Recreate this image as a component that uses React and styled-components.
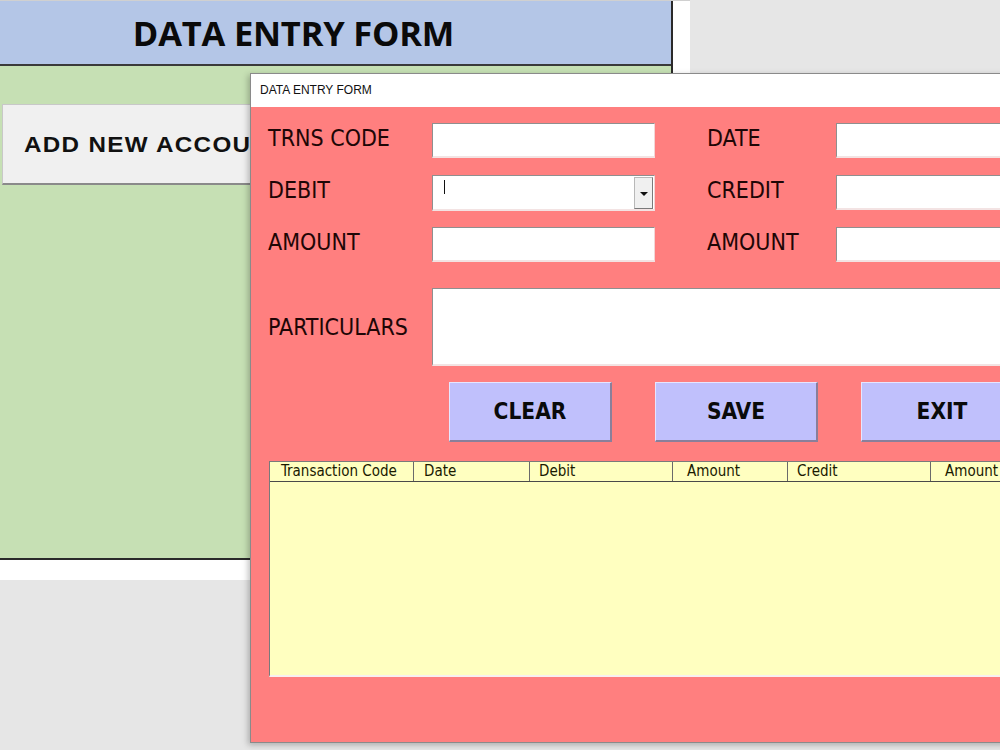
import React from 'react'
import styled, { createGlobalStyle } from 'styled-components'

const Global = createGlobalStyle`
  html, body {
    margin: 0;
    padding: 0;
    background: #e6e6e6;
    overflow: hidden;
  }
  * { box-sizing: border-box; }
`

const Screen = styled.div`
  position: relative;
  width: 1000px;
  height: 750px;
  overflow: hidden;
  background: #e6e6e6;
`

const Sheet = styled.div`
  width: 690px;
  height: 580px;
  background: #ffffff;
  border-top: 1px solid #d0d0d0;
`

const Panel = styled.div`
  width: 673px;
  border-right: 2px solid #2a2a2a;
  display: flex;
  flex-direction: column;
`

const Banner = styled.div`
  height: 65px;
  background: #b4c6e7;
  border-bottom: 2px solid #3a3a3a;
  display: flex;
  align-items: center;
  justify-content: center;
  font-family: "Open Sans", "Liberation Sans", sans-serif;
  font-weight: 700;
  font-size: 34.5px;
  color: #0a0a0a;
  padding-right: 84px;
  letter-spacing: -0.2px;
`

const GreenArea = styled.div`
  height: 494px;
  background: #c6e0b4;
  border-bottom: 2px solid #2a2a2a;
  padding: 38px 0 0 2px;
`

const AccountButton = styled.div`
  width: 340px;
  height: 81px;
  background: #f0f0f0;
  border: 1px solid #c8c8c8;
  border-bottom: 2px solid #8a8a8a;
  display: flex;
  align-items: center;
  padding-left: 21px;
  padding-top: 2px;
  font-family: "Liberation Sans", Arial, sans-serif;
  font-weight: 700;
  font-size: 22px;
  color: #111;
  white-space: nowrap;
`

const WideText = styled.span`
  display: inline-block;
  letter-spacing: 1.2px;
  transform: scaleX(1.1);
  transform-origin: left center;
`

/* the userform window floats over the sheet */
const Dialog = styled.div`
  position: absolute;
  left: 250px;
  top: 73px;
  width: 820px;
  height: 670px;
  border: 1px solid #8a8a8a;
  box-shadow: -2px 2px 6px rgba(0, 0, 0, 0.25);
  display: flex;
  flex-direction: column;
  background: #ff7f7f;
`

const TitleBar = styled.div`
  height: 33px;
  background: #ffffff;
  display: flex;
  align-items: center;
  padding-left: 9px;
  padding-bottom: 2px;
  font-family: "Liberation Sans", Arial, sans-serif;
  font-size: 12px;
  color: #111;
`

const Body = styled.div`
  flex: 1;
  padding: 16px 0 0 17px;
  display: flex;
  flex-direction: column;
  font-family: "DejaVu Sans Condensed", "DejaVu Sans", sans-serif;
  color: #1e0606;
`

const FormGrid = styled.div`
  display: grid;
  grid-template-columns: 164px 223px 52px 129px 223px;
  grid-auto-rows: 35px;
  row-gap: 17px;
  align-items: center;
`

const Label = styled.div`
  font-size: 23px;
  line-height: 1;
  padding-bottom: ${p => (p.$raise ? '0px' : '4px')};
`

const Field = styled.div`
  position: relative;
  height: ${p => p.$h || 35}px;
  background: #ffffff;
  border-style: solid;
  border-width: 1px 1px 2px 1px;
  border-color: #8f8f8f #f3d6d6 #f3e3e3 #8f8f8f;
`

const Caret = styled.span`
  position: absolute;
  left: 11px;
  top: 4px;
  width: 1px;
  height: 14px;
  background: #111;
`

const DropButton = styled.div`
  position: absolute;
  right: 1px;
  top: 1px;
  bottom: 0;
  width: 19px;
  background: #f0f0f0;
  border: 1px solid #b8b8b8;
  border-right-color: #7a7a7a;
  border-bottom-color: #7a7a7a;
  display: flex;
  align-items: center;
  justify-content: center;
`

const Arrow = styled.span`
  width: 0;
  height: 0;
  border-left: 4px solid transparent;
  border-right: 4px solid transparent;
  border-top: 4px solid #111;
  margin-top: 2px;
`

const ParticularsRow = styled.div`
  display: grid;
  grid-template-columns: 164px 640px;
  align-items: center;
  margin-top: 26px;
`

const ButtonRow = styled.div`
  display: flex;
  gap: 43px;
  margin: 16px 0 0 181px;
`

const ActionButton = styled.div`
  width: 163px;
  height: 60px;
  flex-shrink: 0;
  background: #c0c0fc;
  border-style: solid;
  border-width: 1px 2px 2px 1px;
  border-color: #e6e6ff #8a7f9a #8a7f9a #e6e6ff;
  display: flex;
  align-items: center;
  justify-content: center;
  font-weight: 700;
  font-size: 22.5px;
  color: #0a0a0a;
  padding-bottom: 2px;
`

const ListBox = styled.div`
  margin: 19px 0 0 1px;
  width: 760px;
  height: 216px;
  background: #ffffc0;
  border-style: solid;
  border-width: 1px 0 2px 1px;
  border-color: #7a7a7a #7a7a7a #f8f0f0 #7a7a7a;
  display: flex;
  flex-direction: column;
`

const HeaderRow = styled.div`
  display: flex;
  height: 20px;
  border-bottom: 1px solid #4a4a4a;
`

const HeaderCell = styled.div`
  width: ${p => p.$w}px;
  flex-shrink: 0;
  padding-left: ${p => p.$pad}px;
  border-right: 1px solid #6a6a6a;
  font-size: 15px;
  line-height: 19px;
  color: #1a1a00;
  white-space: nowrap;
  overflow: hidden;
  &:last-child { border-right: none; }
`

const columns = [
  { name: 'Transaction Code', w: 144, pad: 11 },
  { name: 'Date', w: 116, pad: 10 },
  { name: 'Debit', w: 143, pad: 9 },
  { name: 'Amount', w: 115, pad: 14 },
  { name: 'Credit', w: 143, pad: 9 },
  { name: 'Amount', w: 120, pad: 14 },
]

export default function App() {
  return (
    <>
      <Global />
      <Screen>
        <Sheet>
          <Panel>
            <Banner>DATA ENTRY FORM</Banner>
            <GreenArea>
              <AccountButton><WideText>ADD NEW ACCOUNT</WideText></AccountButton>
            </GreenArea>
          </Panel>
        </Sheet>

        <Dialog>
          <TitleBar>DATA ENTRY FORM</TitleBar>
          <Body>
            <FormGrid>
              <Label>TRNS CODE</Label>
              <Field />
              <span />
              <Label>DATE</Label>
              <Field />

              <Label>DEBIT</Label>
              <Field $h={36}>
                <Caret />
                <DropButton><Arrow /></DropButton>
              </Field>
              <span />
              <Label>CREDIT</Label>
              <Field />

              <Label>AMOUNT</Label>
              <Field />
              <span />
              <Label>AMOUNT</Label>
              <Field />
            </FormGrid>

            <ParticularsRow>
              <Label $raise>PARTICULARS</Label>
              <Field $h={78} />
            </ParticularsRow>

            <ButtonRow>
              <ActionButton>CLEAR</ActionButton>
              <ActionButton>SAVE</ActionButton>
              <ActionButton>EXIT</ActionButton>
            </ButtonRow>

            <ListBox>
              <HeaderRow>
                {columns.map((c, i) => (
                  <HeaderCell key={i} $w={c.w} $pad={c.pad}>{c.name}</HeaderCell>
                ))}
              </HeaderRow>
            </ListBox>
          </Body>
        </Dialog>
      </Screen>
    </>
  )
}
